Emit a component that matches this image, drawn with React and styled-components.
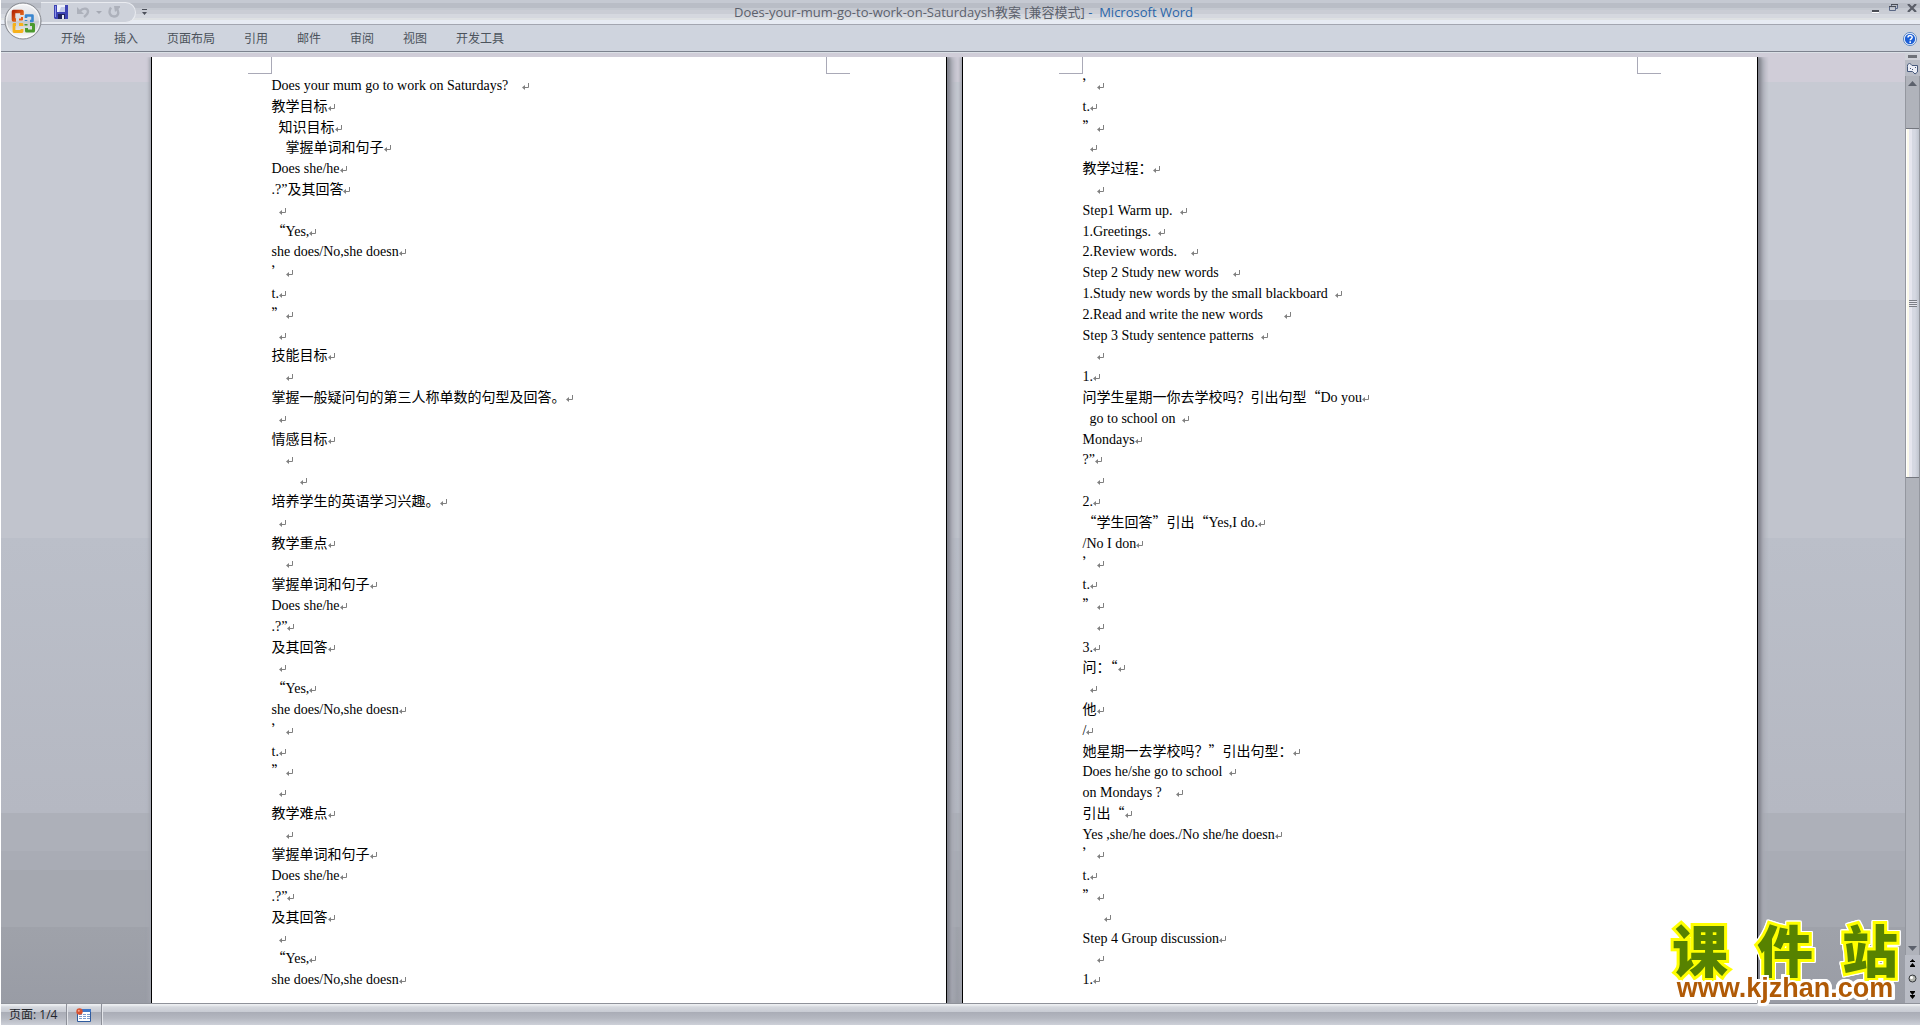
import styled, { createGlobalStyle } from "styled-components"

const tabs = ["开始", "插入", "页面布局", "引用", "邮件", "审阅", "视图", "开发工具"]

// {…} marks the full width punctuation, set in the Chinese font
const leftLines = [
  "Does your mum go to work on Saturdays?    ",
  "教学目标",
  "  知识目标",
  "    掌握单词和句子",
  "Does she/he",
  ".?”及其回答",
  "  ",
  "{“}Yes,",
  "she does/No,she doesn",
  "{’}",
  "t.",
  "{”}",
  "  ",
  "技能目标",
  "    ",
  "掌握一般疑问句的第三人称单数的句型及回答。",
  "  ",
  "情感目标",
  "    ",
  "        ",
  "培养学生的英语学习兴趣。",
  "  ",
  "教学重点",
  "    ",
  "掌握单词和句子",
  "Does she/he",
  ".?”",
  "及其回答",
  "  ",
  "{“}Yes,",
  "she does/No,she doesn",
  "{’}",
  "t.",
  "{”}",
  "  ",
  "教学难点",
  "    ",
  "掌握单词和句子",
  "Does she/he",
  ".?”",
  "及其回答",
  "  ",
  "{“}Yes,",
  "she does/No,she doesn",
]

const rightLines = [
  "{’}",
  "t.",
  "{”}",
  "  ",
  "教学过程：",
  "    ",
  "Step1 Warm up.  ",
  "1.Greetings.  ",
  "2.Review words.    ",
  "Step 2 Study new words    ",
  "1.Study new words by the small blackboard  ",
  "2.Read and write the new words      ",
  "Step 3 Study sentence patterns  ",
  "    ",
  "1.",
  "问学生星期一你去学校吗？引出句型{“}Do you",
  "  go to school on  ",
  "Mondays",
  "?”",
  "    ",
  "2.",
  "{“}学生回答{”}引出{“}Yes,I do.",
  "/No I don",
  "{’}",
  "t.",
  "{”}",
  "    ",
  "3.",
  "问：{“}",
  "  ",
  "他",
  "/",
  "她星期一去学校吗？{”}引出句型：",
  "Does he/she go to school  ",
  "on Mondays ?    ",
  "引出{“}",
  "Yes ,she/he does./No she/he doesn",
  "{’}",
  "t.",
  "{”}",
  "      ",
  "Step 4 Group discussion",
  "    ",
  "1.",
]

const ReturnMark = () => (
  <Mark width="8" height="8" viewBox="0 0 8 8" aria-hidden="true">
    <path d="M6.500 0v4.500H2" fill="none" stroke="#808080" />
    <path d="M0 4.500 3 2v5z" fill="#808080" />
  </Mark>
)

const Page = ({ lines }) => (
  <Sheet>
    <Corners>
      <Corner $side="right" />
      <Corner $side="left" />
    </Corners>
    <Lines>
      {lines.map((line, i) => (
        <Line key={i}>
          {line.split(/[{}]/).map((part, j) => (j % 2 ? <Wide key={j}>{part}</Wide> : part))}
          <ReturnMark />
        </Line>
      ))}
    </Lines>
  </Sheet>
)

const OfficeLogo = () => (
  <svg width="38" height="38" viewBox="0 0 38 38" aria-hidden="true">
    <defs>
      <linearGradient id="orb" x1="0" y1="0" x2="0" y2="1">
        <stop offset="0" stopColor="#f4f5f7" />
        <stop offset="0.48" stopColor="#d9dbdf" />
        <stop offset="0.52" stopColor="#c6c9ce" />
        <stop offset="1" stopColor="#ffffff" />
      </linearGradient>
      <linearGradient id="red" x1="0" y1="0" x2="1" y2="1">
        <stop offset="0" stopColor="#b52a08" />
        <stop offset="1" stopColor="#f47a20" />
      </linearGradient>
    </defs>
    <circle cx="19" cy="19" r="18" fill="url(#orb)" stroke="#84878e" />
    <circle cx="19" cy="19" r="16.5" fill="none" stroke="#fff" strokeOpacity="0.8" />
    <g fill="none" strokeLinejoin="round">
      <path d="M12 18H9.500V9.500H18V13" stroke="url(#red)" strokeWidth="3.600" />
      <path d="M15 17.500h3V15" stroke="#ea5a12" strokeWidth="2" />
      <path d="M22 16v-2.500h6.500V19H26M22 18v1" stroke="#3a86cf" strokeWidth="2.600" />
      <path d="M12 22.500H10V29.500h8V27M15 22.500h3V24" stroke="#f6b11c" strokeWidth="2.800" />
      <path d="M26 22.500h3.500v6.500H22.500V26M22 22v1.500" stroke="#4b9a2c" strokeWidth="3" />
    </g>
  </svg>
)

const SaveIcon = () => (
  <svg width="14" height="14" viewBox="0 0 14 14" aria-hidden="true">
    <path d="M0 0h14v14H1l-1-1z" fill="#3d43b4" />
    <path d="M1 1h1v11H1z" fill="#8c93ea" />
    <path d="M3 0h8v7H3z" fill="#eef1fb" />
    <path d="M7 2h4v5H5z" fill="#c3cbea" />
    <path d="M4 9h7v5H4z" fill="#20235e" />
    <path d="M8 10h2v4H8z" fill="#e8ebf5" />
  </svg>
)

const UndoIcon = () => (
  <svg width="13" height="12" viewBox="0 0 13 12" aria-hidden="true">
    <path d="M3 5C6 1.500 11 2 11 5.500 11 8 9 9.500 7 11" fill="none" stroke="#adb1bb" strokeWidth="2.400" />
    <path d="M0 1v7h7z" fill="#adb1bb" />
  </svg>
)

const RedoIcon = () => (
  <svg width="13" height="12" viewBox="0 0 13 12" aria-hidden="true">
    <path d="M3 1.500C0 6 2 10.500 6 10.500S11.500 7 9 3" fill="none" stroke="#adb1bb" strokeWidth="2.400" />
    <path d="M6 0h6v1.500L7 6z" fill="#adb1bb" />
  </svg>
)

const MacroIcon = () => (
  <svg width="16" height="14" viewBox="0 0 16 14" aria-hidden="true">
    <path d="M1.500 1.500h13v12h-13z" fill="#fff" stroke="#2f5b9e" />
    <path d="M1 1h14v3H1z" fill="#3f77c8" />
    <path d="M3 6.500h3M7 6.500h3M11 6.500h3M3 8.500h3M7 8.500h3M11 8.500h3M3 10.500h3M7 10.500h3M11 10.500h3" stroke="#7c9dcf" />
    <circle cx="3.500" cy="3.500" r="3.200" fill="#d8512f" />
    <circle cx="2.800" cy="2.800" r="1" fill="#f3a98e" />
  </svg>
)

const HelpIcon = () => (
  <svg width="14" height="14" viewBox="0 0 14 14" aria-hidden="true">
    <circle cx="7" cy="7" r="6.500" fill="#fff" stroke="#5682c0" />
    <circle cx="7" cy="7" r="5.200" fill="#1d5fd6" />
    <path d="M5 5.500C5 3 9.200 3 9.200 5.300 9.200 6.800 7.200 6.800 7.200 8.300M7.200 9.300v1.600" fill="none" stroke="#fff" strokeWidth="1.500" />
  </svg>
)

const RulerIcon = () => (
  <svg width="13" height="13" viewBox="0 0 13 13" aria-hidden="true">
    <path d="M1.500 4.500V3l2-2L6 3.500h5.500V10L9 12 6.500 9.500h-5z" fill="#eceef6" stroke="#47597c" />
    <path d="M4 6.500h1M6 7.500h1M9 5.500h1" stroke="#47597c" />
  </svg>
)

const Arrow = ({ d, height = 5 }) => (
  <svg width="9" height={height} viewBox={`0 0 9 ${height}`} aria-hidden="true">
    <path d={d} fill="#5c616c" />
  </svg>
)

const App = () => {
  return (
    <>
      <GlobalStyle />
      <Window>
        <TopBars>
          <OrbButton aria-label="Office">
            <OfficeLogo />
          </OrbButton>
          <BarStack>
            <TitleBar>
              <QuickAccess>
                <IconButton aria-label="保存"><SaveIcon /></IconButton>
                <IconButton aria-label="撤消"><UndoIcon /></IconButton>
                <Caret />
                <IconButton aria-label="恢复"><RedoIcon /></IconButton>
              </QuickAccess>
              <IconButton aria-label="自定义快速访问工具栏">
                <svg width="5" height="6" viewBox="0 0 5 6">
                  <path d="M0 0h5v1H0zM0 3h5L2.500 6z" fill="#4c505a" />
                </svg>
              </IconButton>
              <Title>
                Does-your-mum-go-to-work-on-Saturdaysh教案 [兼容模式] <b>-&nbsp; Microsoft Word</b>
              </Title>
              <WindowButtons>
                <IconButton aria-label="最小化">
                  <svg width="8" height="9" viewBox="0 0 8 9">
                    <path d="M0 6h7v2H0z" fill="#4a4d55" />
                    <path d="M0 8h7v1H0z" fill="#fff" />
                  </svg>
                </IconButton>
                <IconButton aria-label="还原">
                  <svg width="9" height="8" viewBox="0 0 9 8">
                    <path d="M2.500 2V.5h6v4H7M.5 2.500h6v4h-6z" fill="none" stroke="#5b6886" />
                    <path d="M2 0h7v1H2zM0 2h7v1H0z" fill="#4a4d55" />
                  </svg>
                </IconButton>
                <IconButton aria-label="关闭">
                  <svg width="10" height="8" viewBox="0 0 10 8">
                    <path d="M1 0 9 8M9 0 1 8" stroke="#5a5e68" strokeWidth="2.200" />
                  </svg>
                </IconButton>
              </WindowButtons>
            </TitleBar>
            <TabBar>
              {tabs.map((tab) => (
                <Tab key={tab}>{tab}</Tab>
              ))}
              <Help aria-label="帮助"><HelpIcon /></Help>
            </TabBar>
          </BarStack>
        </TopBars>

        <Workspace>
          <Pages>
            <Page lines={leftLines} />
            <Page lines={rightLines} />
          </Pages>
          <ScrollColumn>
            <SplitHandle />
            <RulerButton aria-label="标尺"><RulerIcon /></RulerButton>
            <Track>
              <ScrollButton aria-label="向上滚动"><Arrow d="M4.500 0 9 5H0z" /></ScrollButton>
              <Spacer $grow={38} />
              <Thumb>
                <Grip />
              </Thumb>
              <Spacer $grow={464} />
              <ScrollButton aria-label="向下滚动"><Arrow d="M0 0h9L4.500 5z" /></ScrollButton>
            </Track>
            <BrowseButtons>
              <IconButton aria-label="前一页">
                <svg width="7" height="8" viewBox="0 0 7 8">
                  <path d="M3.500 0 6 3H1zM3.500 4 6 7H1zM1 2h5v1H1zM1 7h5v1H1z" fill="#000" />
                </svg>
              </IconButton>
              <IconButton aria-label="选择浏览对象">
                <svg width="9" height="9" viewBox="0 0 9 9">
                  <circle cx="4.500" cy="4.500" r="3.500" fill="#b4b6b0" stroke="#33363c" />
                  <circle cx="3.500" cy="3.500" r="1.500" fill="#fff" />
                </svg>
              </IconButton>
              <IconButton aria-label="下一页">
                <svg width="7" height="8" viewBox="0 0 7 8">
                  <path d="M3.500 4 6 1H1zM3.500 8 6 5H1zM1 0h5v1H1zM1 4h5v1H1z" fill="#000" />
                </svg>
              </IconButton>
            </BrowseButtons>
          </ScrollColumn>
        </Workspace>

        <StatusBar>
          <StatusItem>页面: 1/4</StatusItem>
          <StatusItem>
            <IconButton aria-label="录制宏"><MacroIcon /></IconButton>
          </StatusItem>
        </StatusBar>

        <Watermark>
          <SiteName>
            <span>课</span>
            <span>件</span>
            <span>站</span>
          </SiteName>
          <SiteUrl>www.kjzhan.com</SiteUrl>
        </Watermark>
      </Window>
    </>
  )
}

const GlobalStyle = createGlobalStyle`
  * {
    box-sizing: border-box;
  }

  body {
    margin: 0;
    overflow: hidden;
  }

  button {
    padding: 0;
    border: 0;
    background: none;
    font: inherit;
    color: inherit;
  }
`

const Window = styled.div`
  position: relative;
  display: flex;
  flex-direction: column;
  height: 100vh;
  border-left: 1px solid #fff;
  font-family: "Open Sans", "Noto Sans CJK SC", sans-serif;
  font-size: 12px;
  color: #4c535c;
`

const TopBars = styled.header`
  position: relative;
`

const BarStack = styled.div`
  display: flex;
  flex-direction: column;
`

const OrbButton = styled.button`
  position: absolute;
  left: 3px;
  top: 2px;
  height: 38px;
`

const TitleBar = styled.div`
  display: flex;
  align-items: center;
  height: 25px;
  padding: 0 3px 0 40px;
  border-bottom: 1px solid #a3a6b0;
  background: linear-gradient(
    #c5c9d2 3px,
    #b9bdc6 3px 8px,
    #c5c9d1 8px 10px,
    #cacdd5 10px 14px,
    #d5d8df 14px 18px,
    #dee1e3 18px 20px,
    #e7ebf3 20px
  );
`

const QuickAccess = styled.div`
  display: flex;
  align-items: center;
  gap: 9px;
  width: 95px;
  height: 21px;
  margin-right: 6px;
  padding-left: 13px;
  border: 1px solid #e9ebf0;
  border-left: 0;
  border-radius: 0 11px 11px 0;
  background: #cdd1da;
`

const IconButton = styled.button`
  display: flex;
  align-items: center;
  justify-content: center;
`

const Caret = styled.i`
  margin: 0 -3px;
  border: 3px solid transparent;
  border-top-color: #a5a9b3;
  border-bottom: 0;
`

const Title = styled.h1`
  flex: 1;
  margin: 0;
  padding-right: 92px;
  font-size: 13px;
  font-weight: 400;
  line-height: 24px;
  text-align: center;
  white-space: pre;
  color: #5c616c;

  b {
    font-weight: 400;
    color: #2a66a8;
  }
`

const WindowButtons = styled.div`
  display: flex;
  align-items: center;
  gap: 9px;
  height: 16px;
  align-self: flex-start;
`

const TabBar = styled.nav`
  display: flex;
  align-items: center;
  gap: 29px;
  height: 28px;
  padding: 0 3px 0 60px;
  border-bottom: 1px solid #dbe0e6;
  box-shadow: inset 0 -1px #7c828e;
  background: #cfd4de;
`

const Tab = styled.button`
  line-height: 20px;
`

const Help = styled.button`
  display: flex;
  margin-left: auto;
`

const Workspace = styled.main`
  display: flex;
  flex: 1;
  min-height: 0;
  padding-top: 4px;
  background: linear-gradient(
    #d0cdd8 3%,
    #c7cad3 3% 26%,
    #c1c4cd 26% 51%,
    #bbbfc9 51%,
    #b5b8c2 80%,
    #adb0b9 80% 84%,
    #a9acb5 84% 86%,
    #a5a8b0 86% 92%,
    #9fa2aa 92%,
    #999ca5
  );
`

const Pages = styled.div`
  display: flex;
  flex: 1;
  justify-content: center;
  gap: 15px;
  padding-left: 2px;
`

const Sheet = styled.article`
  display: flex;
  flex-direction: column;
  flex: 0 1 796px;
  padding: 0 96px;
  border: solid #000;
  border-width: 0 1px;
  background: #fff;
  box-shadow: 3px 0 3px #80838c, 7px 0 5px #a8abb4, -2px 0 3px #a3a6af;
  clip-path: inset(0 -11px 0 -6px);
`

const Corners = styled.div`
  display: flex;
  justify-content: space-between;
`

const Corner = styled.i`
  width: 24px;
  height: 17px;
  border-bottom: 1px solid #a9a9b7;
  border-${(props) => props.$side}: 1px solid #a9a9b7;
`

const Lines = styled.div`
  display: flex;
  flex-direction: column;
  flex: 1;
  min-height: 0;
  padding: 1px 24px 13px;
`

const Line = styled.p`
  flex: 1;
  min-height: 0;
  margin: 0;
  font-family: "Liberation Serif", "Noto Sans CJK SC", serif;
  font-size: 14px;
  line-height: 21px;
  white-space: pre;
  color: #000;
`

const Wide = styled.span`
  font-family: "Noto Sans CJK SC", sans-serif;
  line-height: 1px;
`

const Mark = styled.svg`
  vertical-align: -1px;
`

const ScrollColumn = styled.aside`
  display: flex;
  flex-direction: column;
  width: 15px;
  margin-top: -4px;
  background: #b9bcc5;
`

const SplitHandle = styled.div`
  height: 7px;
  border: solid #d0d2d9;
  border-width: 2px 3px;
  background: #6e7178;
`

const RulerButton = styled.button`
  display: flex;
  align-items: center;
  justify-content: center;
  height: 16px;
`

const Track = styled.div`
  display: flex;
  flex-direction: column;
  flex: 1;
  border: solid #94979f;
  border-width: 0 1px;
  background: #b0b3bb;
`

const ScrollButton = styled.button`
  display: flex;
  align-items: center;
  justify-content: center;
  height: 14px;
`

const Spacer = styled.div`
  flex: ${(props) => props.$grow};
`

const Thumb = styled.div`
  display: flex;
  flex: 349;
  align-items: center;
  justify-content: center;
  border: 1px solid #74777f;
  border-width: 1px 0;
  background: linear-gradient(90deg, #fff 1px, #fbf9ea 1px 3px, #e6e6ef 3px 6px, #d5d8e2 6px 9px, #bfc4ce);
`

const Grip = styled.i`
  width: 8px;
  height: 7px;
  background: repeating-linear-gradient(#7b7e86 0 1px, #e6e6ee 1px 2px);
`

const BrowseButtons = styled.div`
  display: flex;
  flex-direction: column;
  align-items: center;
  justify-content: space-around;
  height: 48px;
`

const StatusBar = styled.footer`
  display: flex;
  height: 22px;
  border-top: 1px solid #8f929a;
  background: linear-gradient(#eceef1 1px, #d5d8de 3px, #c8cbd3 8px, #a9acb6 8px, #b4b7c0 14px, #cdd0d8);
`

const StatusItem = styled.div`
  display: flex;
  align-items: center;
  padding: 0 9px 0 8px;
  border-right: 1px solid #8d9099;
  box-shadow: 1px 0 #e3e5ea;
  line-height: 20px;
  color: #22252b;

  & + & {
    padding-left: 9px;
  }
`

const Watermark = styled.div`
  position: absolute;
  right: 22px;
  bottom: 25px;
  width: 226px;
  filter: drop-shadow(1px 0 #fff) drop-shadow(-1px 0 #fff) drop-shadow(0 1px #fff) drop-shadow(0 -1px #fff);
`

const SiteName = styled.div`
  display: flex;
  justify-content: space-between;
  font-family: "Liberation Sans", "Noto Sans CJK SC", sans-serif;
  font-size: 56px;
  font-weight: 900;
  line-height: 46px;
  color: #578200;
  -webkit-text-stroke: 6px #ff0;
  paint-order: stroke fill;
`

const SiteUrl = styled.div`
  position: relative;
  font-family: "Liberation Sans", sans-serif;
  font-size: 27px;
  font-weight: 700;
  line-height: 24px;
  text-align: center;
  color: #b05a06;
  -webkit-text-stroke: 4px #fff;
  paint-order: stroke fill;
`

export default App
